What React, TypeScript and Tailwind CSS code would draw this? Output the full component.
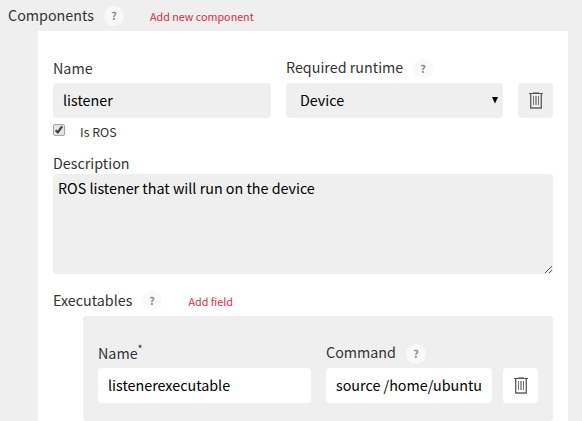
import React from "react";

function Help({ className = "" }: { className?: string }) {
  return (
    <span
      className={`flex h-5 w-5 shrink-0 items-center justify-center rounded-full bg-[#f9f9f9] text-[10.74px] leading-none font-bold text-[#8a8a8a] ${className}`}
    >
      ?
    </span>
  );
}

function Trash({ className = "" }: { className?: string }) {
  return (
    <button className={`flex h-[35px] w-[35px] shrink-0 items-center justify-center rounded pl-px ${className}`}>
      <svg width="14" height="17" viewBox="0 0 14 17" fill="none" stroke="#555">
        <path d="M0 1.5h14" />
        <path d="M4 .5h6" stroke="#999" />
        <path d="M1.7 2v14h10.6V2" strokeWidth="1.4" stroke="#666" />
        <path d="M4.5 4v9M9.5 4v9" stroke="#777" />
        <path d="M7 4v9" strokeWidth="1.4" stroke="#777" />
      </svg>
    </button>
  );
}

export default function App() {
  return (
    <div className="h-[421px] w-[582px] overflow-hidden bg-[#efefef] font-['Noto_Sans_CJK_SC',sans-serif] text-[14.32px] text-[#333]">
      <header className="flex h-[31px] items-center pl-2">
        <h1 className="w-24 pb-[2px] leading-[29px]">Components</h1>
        <Help className="mt-px" />
        <a className="ml-[26px] pt-[3px] text-[10.74px] text-[#dd2648]">Add new component</a>
      </header>

      <main className="ml-[38px] h-[390px] w-[530px] bg-white px-[15px] pt-[22px]">
        <div className="flex gap-[15px]">
          <div className="w-[218px]">
            <label className="block h-[30px] leading-[30px]">Name</label>
            <div className="h-[35px] rounded bg-[#efefef] px-[10px] leading-[33px] text-black">listener</div>
          </div>
          <div className="w-[217px]">
            <div className="flex h-[30px]">
              <label className="w-[127px] leading-[28px]">Required runtime</label>
              <Help className="mt-[6px]" />
            </div>
            <div className="flex h-[35px] justify-between rounded bg-[#efefef] pr-[5px] pl-[14px] leading-[33px] text-black">
              Device
              <svg width="6" height="7" viewBox="0 0 6 7" className="mt-[14px]">
                <path d="M0 0h6L3 6.5z" />
              </svg>
            </div>
          </div>
          <Trash className="mt-[30px] bg-[#efefef]" />
        </div>

        <div className="flex h-[34px] pt-[6px]">
          <svg width="12" height="12" viewBox="0 0 12 12">
            <rect x=".5" y=".5" width="11" height="11" rx="1.5" fill="#e4e4e4" stroke="#a5a5a5" />
            <path d="M2.7 6.2l2.1 2.2 4.3-6" fill="none" stroke="#404040" strokeWidth="2.2" />
          </svg>
          <label className="ml-[15px] h-[17px] text-[12.4px] leading-[17px]">Is ROS</label>
        </div>

        <label className="block h-[22px] leading-[22px]">Description</label>
        <div className="flex h-[100px] items-end justify-between rounded bg-[#efefef] pl-[5px] text-black">
          <p className="self-start leading-[27px]">ROS listener that will run on the device</p>
          <svg width="9" height="9" viewBox="0 0 9 9" stroke="#444" strokeWidth=".9">
            <path d="M1 8l7-7M5 8l3-3" />
          </svg>
        </div>

        <div className="flex h-[42px] items-center pt-[13px]">
          <h2 className="w-[89px] pb-[4px]">Executables</h2>
          <Help className="mb-px" />
          <a className="ml-[26.5px] pt-px text-[10.74px] text-[#dd2648]">Add field</a>
        </div>

        <section className="ml-[30px] flex h-[105px] rounded bg-[#efefef] px-[15px] pt-[22px]">
          <div className="w-[213px]">
            <label className="flex h-[30px] leading-[30px]">
              Name<span className="text-[10.74px] leading-[22px]">*</span>
            </label>
            <div className="h-[35px] rounded bg-white px-[10px] leading-[33px] text-black">listenerexecutable</div>
          </div>
          <div className="ml-[15px] w-[166px]">
            <div className="flex h-[30px]">
              <label className="w-20 leading-[28px]">Command</label>
              <Help className="mt-[6px]" />
            </div>
            <div className="h-[35px] rounded bg-white px-[10px] leading-[33px] whitespace-nowrap text-black">source /home/ubuntu</div>
          </div>
          <Trash className="mt-[30px] ml-[11px] bg-white" />
        </section>
      </main>
    </div>
  );
}
